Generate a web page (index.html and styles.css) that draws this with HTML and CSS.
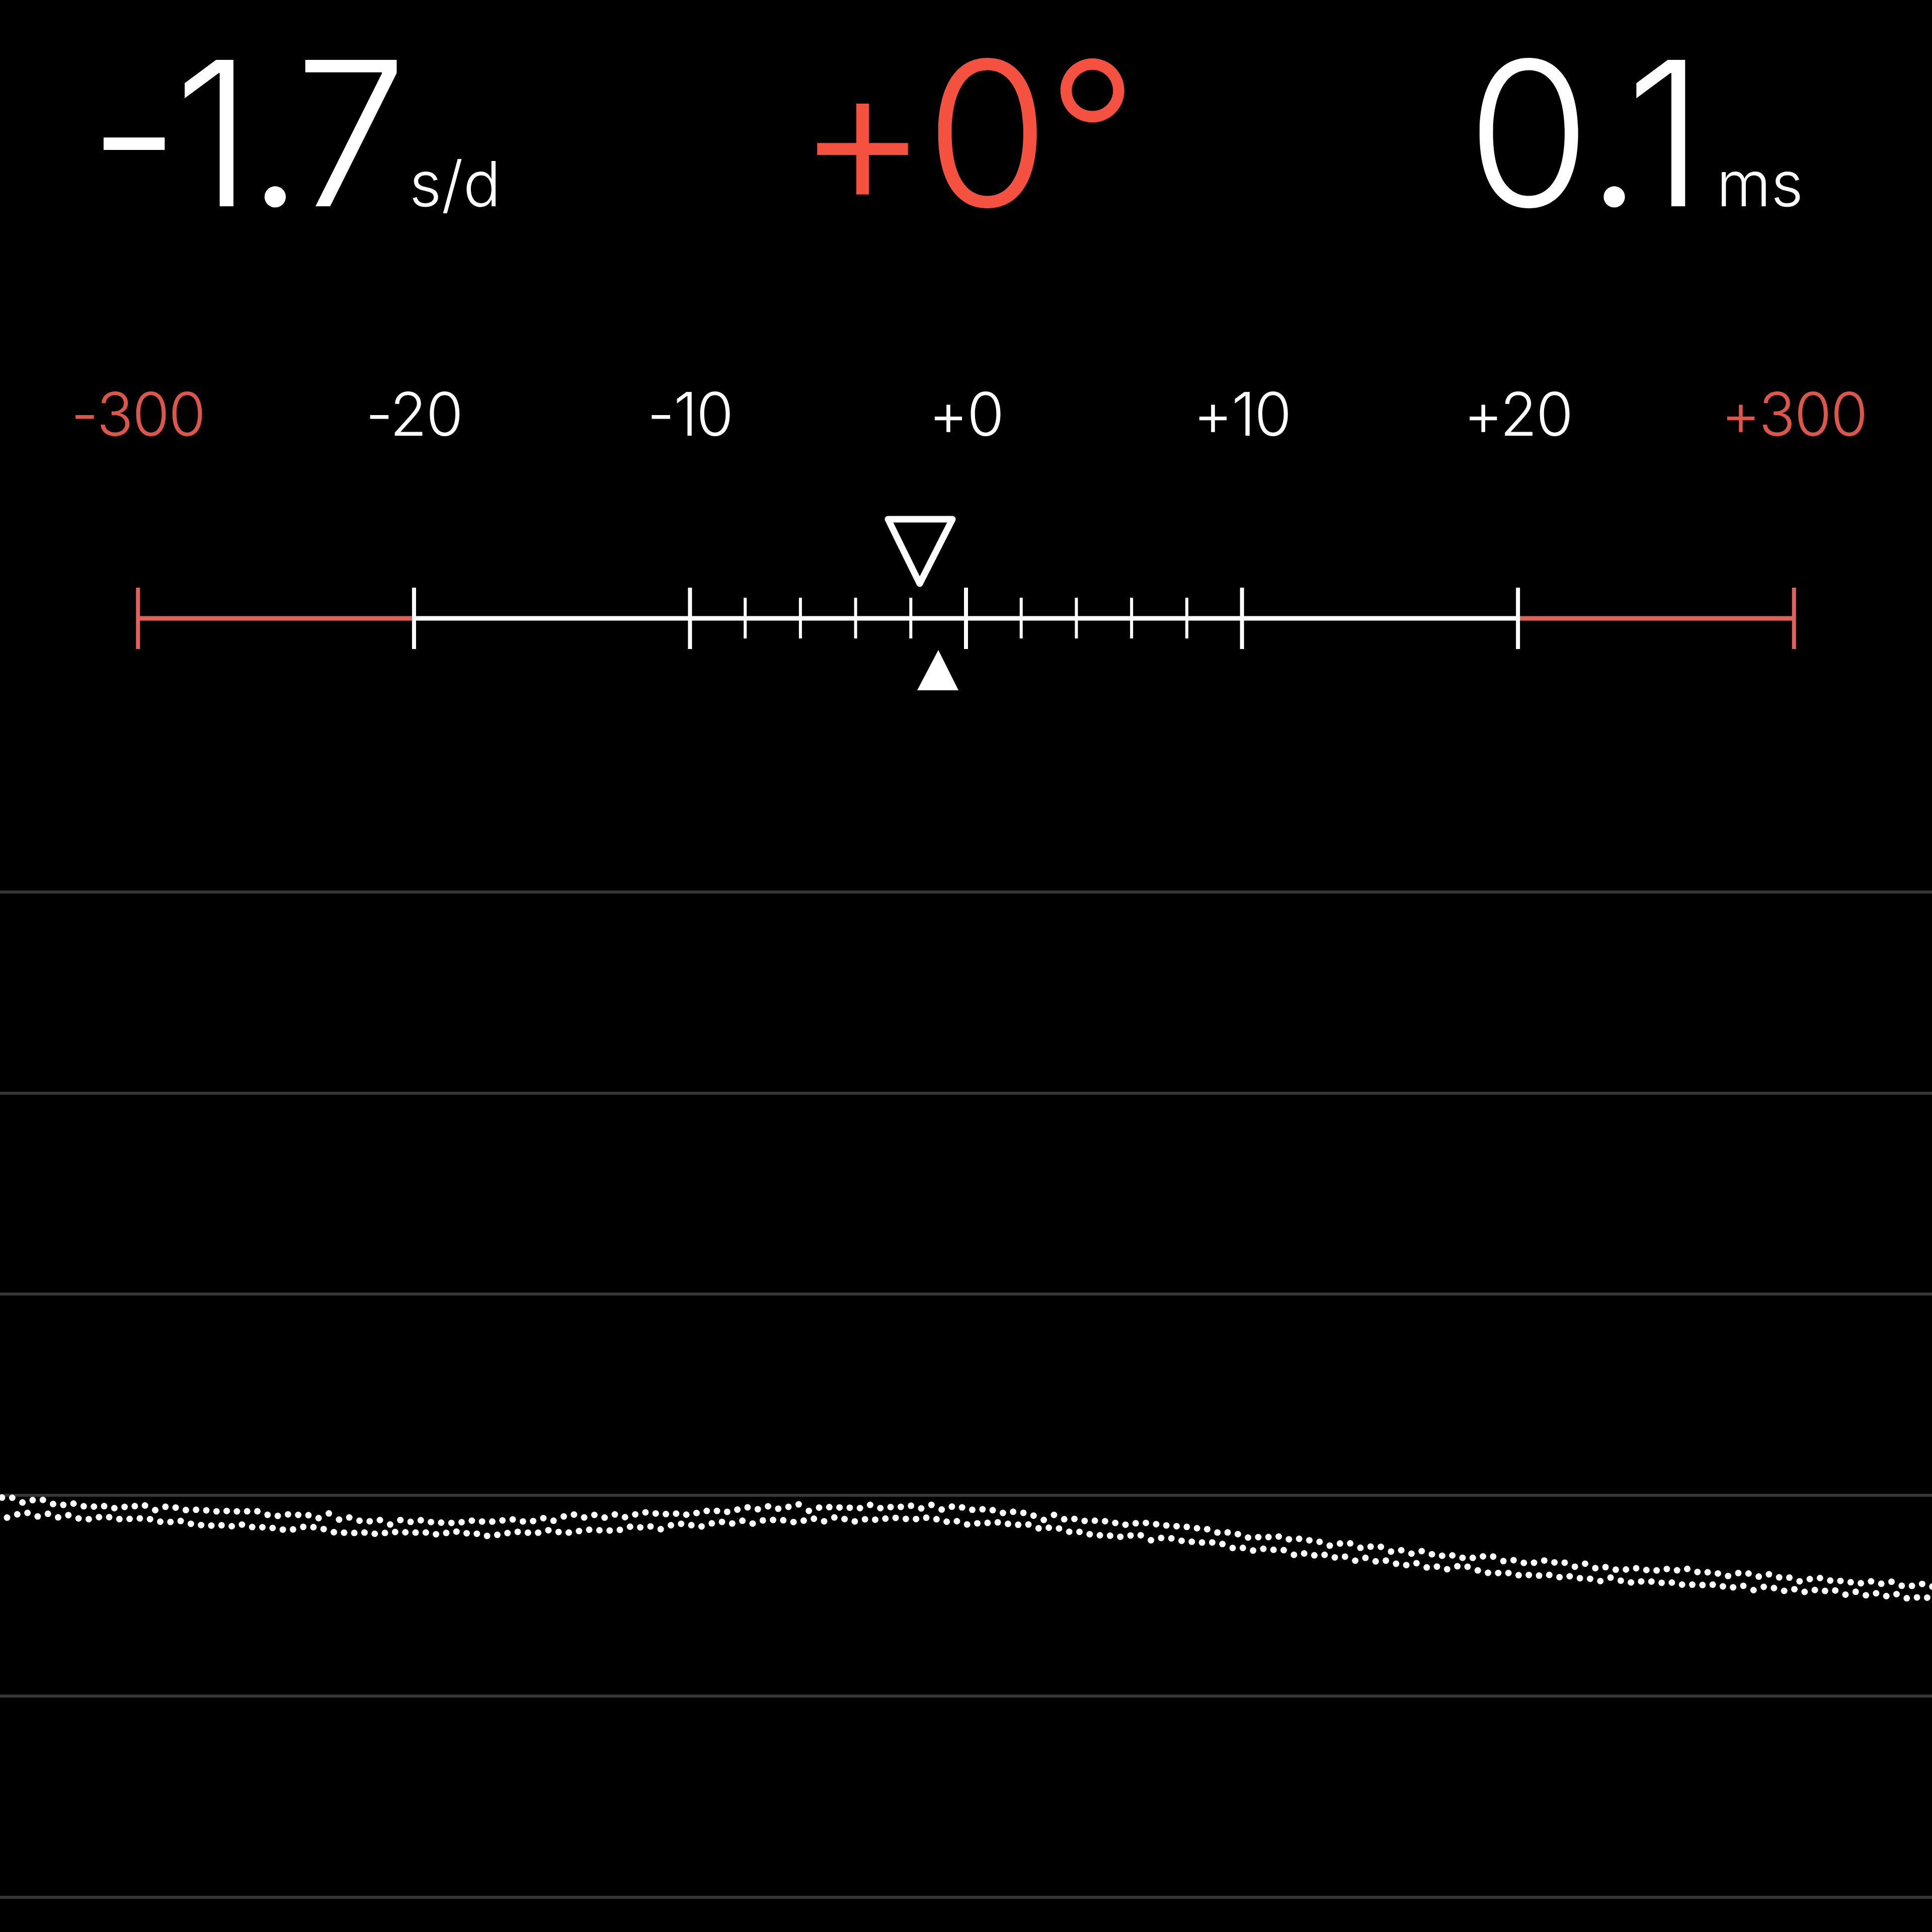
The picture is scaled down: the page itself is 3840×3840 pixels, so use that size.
FILE: index.html
```html
<!DOCTYPE html>
<html>

<head>
    <title>Timegrapher</title>
    <link rel="stylesheet" href="styles.css">
</head>

<body>
    <div class="readouts">
        <div class="readout readout-rate">
            <span class="value">-1.7</span><span class="unit">s/d</span>
        </div>
        <div class="readout readout-beat">
            <span class="value">+0°</span>
        </div>
        <div class="readout readout-amp">
            <span class="value">0.1</span><span class="unit">ms</span>
        </div>
    </div>

    <div class="scale-labels">
        <span class="warn">-300</span>
        <span>-20</span>
        <span>-10</span>
        <span>+0</span>
        <span>+10</span>
        <span>+20</span>
        <span class="warn">+300</span>
    </div>

    <svg class="gauge" width="3840" height="400" viewBox="0 0 3840 400">
        <!-- base line -->
        <line class="warn-stroke" x1="274" y1="229" x2="823" y2="229" stroke-width="9" />
        <line class="ok-stroke" x1="823" y1="229" x2="3017" y2="229" stroke-width="9" />
        <line class="warn-stroke" x1="3017" y1="229" x2="3566" y2="229" stroke-width="9" />

        <!-- major ticks -->
        <line class="warn-stroke" x1="274.3" y1="168" x2="274.3" y2="290" stroke-width="8" />
        <line class="ok-stroke" x1="822.9" y1="168" x2="822.9" y2="290" stroke-width="8" />
        <line class="ok-stroke" x1="1371.4" y1="168" x2="1371.4" y2="290" stroke-width="8" />
        <line class="ok-stroke" x1="1920" y1="168" x2="1920" y2="290" stroke-width="8" />
        <line class="ok-stroke" x1="2468.6" y1="168" x2="2468.6" y2="290" stroke-width="8" />
        <line class="ok-stroke" x1="3017.1" y1="168" x2="3017.1" y2="290" stroke-width="8" />
        <line class="warn-stroke" x1="3565.7" y1="168" x2="3565.7" y2="290" stroke-width="8" />

        <!-- minor ticks -->
        <line class="ok-stroke" x1="1481.1" y1="188" x2="1481.1" y2="269" stroke-width="6" />
        <line class="ok-stroke" x1="1590.9" y1="188" x2="1590.9" y2="269" stroke-width="6" />
        <line class="ok-stroke" x1="1700.6" y1="188" x2="1700.6" y2="269" stroke-width="6" />
        <line class="ok-stroke" x1="1810.3" y1="188" x2="1810.3" y2="269" stroke-width="6" />
        <line class="ok-stroke" x1="2029.7" y1="188" x2="2029.7" y2="269" stroke-width="6" />
        <line class="ok-stroke" x1="2139.4" y1="188" x2="2139.4" y2="269" stroke-width="6" />
        <line class="ok-stroke" x1="2249.1" y1="188" x2="2249.1" y2="269" stroke-width="6" />
        <line class="ok-stroke" x1="2358.9" y1="188" x2="2358.9" y2="269" stroke-width="6" />

        <!-- markers -->
        <polygon class="marker-avg" points="1765,32 1893,32 1828,160" />
        <polygon class="marker-now" points="1823,372 1905,372 1865,292" />
    </svg>

    <div class="chart">
        <div class="gridline"></div>
        <div class="gridline"></div>
        <div class="gridline"></div>
        <div class="gridline"></div>
        <div class="gridline"></div>
        <div class="gridline"></div>
        <svg id="beats" class="beats" width="3840" height="2440" viewBox="0 0 3840 2440"></svg>
    </div>

    <script>
        // trend of the beat trace, [x, y] in page pixels
        const trend = [
            [0, 2993], [245, 3007], [490, 3020], [808, 3037], [1102, 3032],
            [1347, 3020], [1592, 3007], [1837, 3007], [2082, 3025], [2327, 3049],
            [2571, 3074], [2816, 3098], [3061, 3118], [3306, 3135], [3551, 3147],
            [3860, 3166]
        ];

        function trendAt(x) {
            for (let i = 1; i < trend.length; i++) {
                if (x <= trend[i][0]) {
                    const [x0, y0] = trend[i - 1];
                    const [x1, y1] = trend[i];
                    return y0 + (y1 - y0) * (x - x0) / (x1 - x0);
                }
            }
            return trend[trend.length - 1][1];
        }

        let seed = 12345;
        function rand() {
            seed = (seed * 16807) % 2147483647;
            return seed / 2147483647;
        }

        function jitter() {
            const j = (rand() - 0.5) * 9;
            return rand() < 0.04 ? j * 2.5 : j;
        }

        function drawBeats() {
            const chart = document.getElementById('beats');
            const top = 1400;
            let dots = '';

            for (let x = 4; x < 3850; x += 20.3) {
                const y = trendAt(x) - top;
                dots += `<circle cx="${x.toFixed(1)}" cy="${(y - 13 + jitter()).toFixed(1)}" r="6.5" />`;
                dots += `<circle cx="${(x + 10).toFixed(1)}" cy="${(y + 13 + jitter()).toFixed(1)}" r="6.5" />`;
            }

            chart.innerHTML = dots;
        }

        drawBeats();
    </script>
</body>

</html>
```

FILE: styles.css
```css
body {
    margin: 0;
    width: 3840px;
    height: 3840px;
    overflow: hidden;
    background-color: #000;
    color: #fff;
    font-family: Inter, "Liberation Sans", sans-serif;
    font-weight: 300;
}

.readouts {
    display: grid;
    grid-template-columns: 1fr auto 1fr;
    align-items: baseline;
    padding-top: 64px;
}

.readout {
    display: flex;
    align-items: baseline;
    line-height: 1;
}

.readout .value {
    font-size: 400px;
}

.readout .unit {
    font-size: 124px;
    margin-left: 24px;
}

.readout-rate {
    justify-self: start;
    margin-left: 176px;
}

.readout-rate .value {
    letter-spacing: -12px;
}

.readout-rate .unit {
    margin-left: 16px;
}

.readout-beat {
    color: #f45141;
}

.readout-beat .value {
    letter-spacing: -6px;
}

.readout-amp {
    justify-self: end;
    margin-right: 256px;
}

.scale-labels {
    display: grid;
    grid-template-columns: repeat(7, 1fr);
    margin-top: 299px;
    font-size: 120px;
    line-height: 1;
    letter-spacing: -2px;
    text-align: center;
}

.scale-labels .warn {
    color: #dc564a;
}

.gauge {
    display: block;
    margin-top: 117px;
}

.warn-stroke {
    stroke: #e0625a;
}

.ok-stroke {
    stroke: #fff;
}

.marker-avg {
    fill: none;
    stroke: #fff;
    stroke-width: 13;
    stroke-linejoin: round;
}

.marker-now {
    fill: #fff;
}

.chart {
    position: relative;
    height: 2440px;
    padding-top: 370px;
    box-sizing: border-box;
    display: flex;
    flex-direction: column;
    gap: 393.5px;
}

.gridline {
    height: 6px;
    background-color: #353535;
}

.beats {
    position: absolute;
    top: 0;
    left: 0;
    fill: #fff;
}
```
